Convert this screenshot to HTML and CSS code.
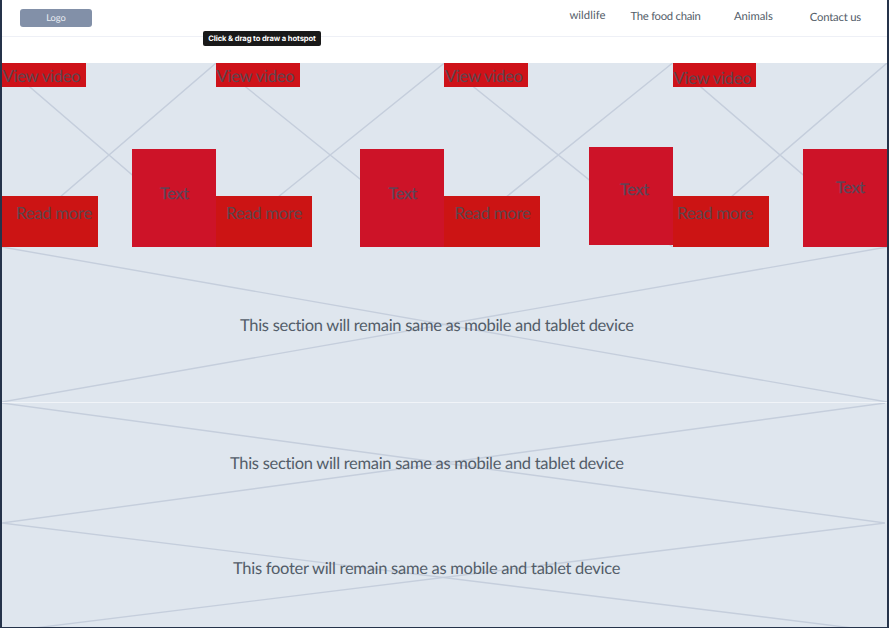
FILE: index.html
```html
<!DOCTYPE html>
<html lang="en">
<head>
<meta charset="utf-8">
<title>Wildlife</title>
<link rel="stylesheet" href="styles.css">
</head>
<body>
<div class="page">
  <header class="header">
    <div class="logo">Logo</div>
    <nav class="nav">
      <a class="wild">wildlife</a>
      <a class="food">The food chain</a>
      <a class="animals">Animals</a>
      <a class="contact">Contact us</a>
    </nav>
    <div class="tooltip"><span>Click &amp; drag to draw a hotspot</span></div>
  </header>
  <main>
    <div class="cards">
      <article class="card first">
        <svg class="cross" viewBox="0 0 100 100" preserveAspectRatio="none"><path d="M0 0L100 100M100 0L0 100"/></svg>
        <div class="video"><span>View video</span></div>
        <div class="bottom"><div class="more"><span>Read more</span></div><div class="text"><span>Text</span></div></div>
      </article>
      <article class="card second">
        <svg class="cross" viewBox="0 0 100 100" preserveAspectRatio="none"><path d="M0 0L100 100M100 0L0 100"/></svg>
        <div class="video"><span>View video</span></div>
        <div class="bottom"><div class="more"><span>Read more</span></div><div class="text"><span>Text</span></div></div>
      </article>
      <article class="card third">
        <svg class="cross" viewBox="0 0 100 100" preserveAspectRatio="none"><path d="M0 0L100 100M100 0L0 100"/></svg>
        <div class="video"><span>View video</span></div>
        <div class="bottom"><div class="more"><span>Read more</span></div><div class="text"><span>Text</span></div></div>
      </article>
      <article class="card fourth">
        <svg class="cross" viewBox="0 0 100 100" preserveAspectRatio="none"><path d="M0 0L100 100M100 0L0 100"/></svg>
        <div class="video"><span>View video</span></div>
        <div class="bottom"><div class="more"><span>Read more</span></div><div class="text"><span>Text</span></div></div>
      </article>
    </div>
    <section class="band band-one">
      <svg class="cross" viewBox="0 0 100 100" preserveAspectRatio="none"><path d="M0 0L100 100M100 0L0 100"/></svg>
      <p>This section will remain same as mobile and tablet device</p>
    </section>
    <section class="band band-two">
      <svg class="cross" viewBox="0 0 100 100" preserveAspectRatio="none"><path d="M0 0L100 100M100 0L0 100"/></svg>
      <p>This section will remain same as mobile and tablet device</p>
    </section>
  </main>
  <footer class="band band-footer">
    <svg class="cross" viewBox="0 0 100 100" preserveAspectRatio="none"><path d="M0 0L100 100M100 0L0 100"/></svg>
    <p>This footer will remain same as mobile and tablet device</p>
  </footer>
</div>
</body>
</html>
```
FILE: styles.css
```css
* { box-sizing: border-box; }
body { margin: 0; font-family: Lato, sans-serif; font-variant-ligatures: none; text-rendering: geometricPrecision; color: #535d69; background: #dfe6ee; overflow: hidden; }
.page { height: 628px; border: solid #25334a; border-width: 0 2px 1px; overflow: hidden; background: #dfe6ee; }
.header { position: relative; height: 63px; background: linear-gradient(#eef0f6, #eef0f6) 0 36px / 100% 1px no-repeat #fff; display: flex; justify-content: space-between; align-items: flex-start; padding: 9px 26px 0 18px; }
.logo { width: 72px; height: 18px; border-radius: 3px; background: #8290a8; color: #e9edf3; font-size: 9.3px; line-height: 17px; text-align: center; }
.nav { display: flex; font-size: 11.3px; line-height: 14px; white-space: nowrap; letter-spacing: -0.2px; }
.wild { letter-spacing: 0.05px; }
.food { margin-left: 25px; padding-top: 1px; letter-spacing: -0.28px; }
.animals { margin-left: 33.5px; padding-top: 1px; letter-spacing: -0.05px; }
.contact { margin-left: 37px; padding-top: 2px; }
.tooltip { position: absolute; left: 201px; top: 31px; width: 118px; height: 15px; border-radius: 2px; background: #191919; color: #fff; font: bold 7.6px/15px Inter, sans-serif; text-align: center; white-space: nowrap; letter-spacing: -0.1px; }
.cards { display: grid; grid-template-columns: 214px 228.4px 228.6px 214px; height: 184px; }
.card { position: relative; display: flex; flex-direction: column; justify-content: space-between; font-size: 16.8px; line-height: 20px; white-space: nowrap; }
.cross { position: absolute; left: 0; top: 0; width: 100%; height: 100%; fill: none; stroke: #c5cedc; stroke-width: 1.4; }
.cross path { vector-effect: non-scaling-stroke; }
.video, .bottom, .band p { position: relative; }
.video { width: 83.5px; height: 24px; padding: 3px 0 0 0.5px; background: #ce1219; color: #61454f; letter-spacing: -0.35px; }
.bottom { display: flex; justify-content: space-between; align-items: flex-end; }
.more { width: 96px; height: 51px; padding: 7px 0 0 10px; background: #cc1414; color: #60454c; letter-spacing: -0.3px; }
.text { width: 84px; height: 98px; padding: 35px 0 0 28px; background: #cd1328; color: #5c4659; font-size: 16px; letter-spacing: -0.2px; -webkit-text-stroke: 0.3px #5c4659; }
.first .more { padding-left: 14px; }
.third .text { margin-bottom: 2px; padding: 33px 0 0 31px; }
.fourth .video { padding-top: 5px; }
.fourth .more { padding-left: 4px; }
.fourth .text { padding: 29px 0 0 33px; }
.band { position: relative; font-size: 16.5px; line-height: 20px; white-space: nowrap; letter-spacing: -0.3px; }
.band p { margin: 0; }
.band-one { height: 156px; border-bottom: 1px solid #f1f4f8; padding: 68px 0 0 238px; }
.band-two { height: 120px; padding: 50px 0 0 228px; }
.band-footer { height: 109px; padding: 35px 0 0 231px; letter-spacing: -0.28px; }
.band-two .cross, .band-footer .cross { width: calc(100% - 2px); }
```
